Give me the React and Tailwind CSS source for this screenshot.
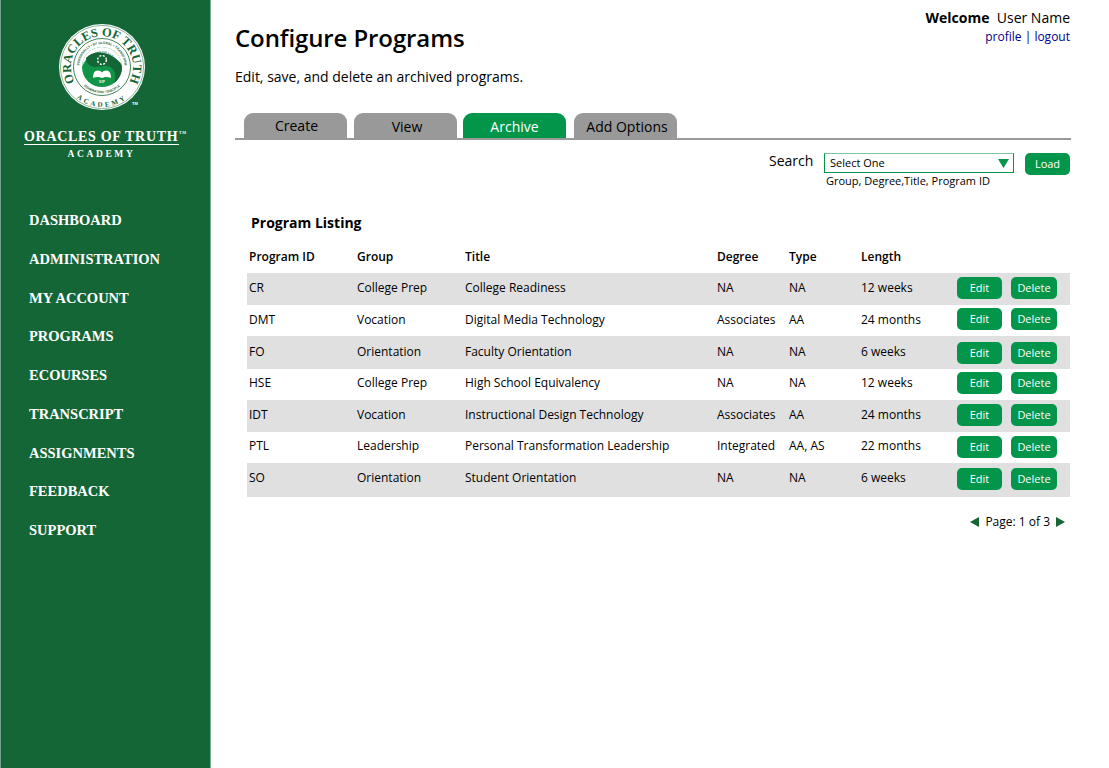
const NAV = [
  "DASHBOARD",
  "ADMINISTRATION",
  "MY ACCOUNT",
  "PROGRAMS",
  "ECOURSES",
  "TRANSCRIPT",
  "ASSIGNMENTS",
  "FEEDBACK",
  "SUPPORT",
];

const TABS = [
  { label: "Create", active: false, cls: "ml-[9px] pl-[2px] pb-[1px]" },
  { label: "View", active: false, cls: "ml-[7px] pl-[3px] pt-[1px]" },
  { label: "Archive", active: true, cls: "ml-[6px] pt-[1px]" },
  { label: "Add Options", active: false, cls: "ml-[8px] pl-[3px] pt-[1px]" },
];

// row heights and inner offsets wobble a little in the original, so they are per row
const ROWS = [
  { id: "CR", group: "College Prep", title: "College Readiness", degree: "NA", type: "NA", length: "12 weeks", h: "h-[32px]", txt: "mt-[7px]", bt: "mt-[4px]" },
  { id: "DMT", group: "Vocation", title: "Digital Media Technology", degree: "Associates", type: "AA", length: "24 months", h: "h-[31px]", txt: "mt-[7px]", bt: "mt-[3px]" },
  { id: "FO", group: "Orientation", title: "Faculty Orientation", degree: "NA", type: "NA", length: "6 weeks", h: "h-[33px]", txt: "mt-[8px]", bt: "mt-[6px]" },
  { id: "HSE", group: "College Prep", title: "High School Equivalency", degree: "NA", type: "NA", length: "12 weeks", h: "h-[31px]", txt: "mt-[6px]", bt: "mt-[3px]" },
  { id: "IDT", group: "Vocation", title: "Instructional Design Technology", degree: "Associates", type: "AA", length: "24 months", h: "h-[32px]", txt: "mt-[7px]", bt: "mt-[4px]" },
  { id: "PTL", group: "Leadership", title: "Personal Transformation Leadership", degree: "Integrated", type: "AA, AS", length: "22 months", h: "h-[31px]", txt: "mt-[6px]", bt: "mt-[4px]" },
  { id: "SO", group: "Orientation", title: "Student Orientation", degree: "NA", type: "NA", length: "6 weeks", h: "h-[34px]", txt: "mt-[7px]", bt: "mt-[5px]" },
];

function Logo() {
  return (
    <svg width="92" height="92" viewBox="0 0 92 92" className="block">
      <defs>
        <path id="arcTop" d="M 18.6 60.6 A 31 31 0 1 1 73.4 60.6" />
        <path id="arcBottom" d="M 15.4 71.7 A 40 40 0 0 0 76.6 71.7" />
        <path id="arcInner" d="M 25.5 55 A 22.6 22.6 0 1 1 66.5 55" />
        <path id="arcInnerBottom" d="M 22.5 58 A 26.5 26.5 0 0 0 69.5 58" />
        <path id="arcMotto" d="M 33 42 A 13.5 13.5 0 0 1 59 42" />
      </defs>
      <circle cx="46" cy="46" r="43" fill="#ffffff" />
      <circle cx="46" cy="46" r="41.6" fill="none" stroke="#156637" strokeWidth="0.5" />
      <text fontFamily="Liberation Serif, serif" fontWeight="700" fontSize="12.5" fill="#156637">
        <textPath href="#arcTop" startOffset="50%" textAnchor="middle">ORACLES OF TRUTH</textPath>
      </text>
      <text fontFamily="Liberation Serif, serif" fontWeight="700" fontSize="7" letterSpacing="2.6" fill="#156637">
        <textPath href="#arcBottom" startOffset="50%" textAnchor="middle">ACADEMY</textPath>
      </text>
      <circle cx="46" cy="46" r="28.5" fill="#ffffff" stroke="#156637" strokeWidth="0.8" />
      <text fontFamily="Liberation Sans, sans-serif" fontWeight="700" fontSize="3.3" fill="#156637">
        <textPath href="#arcInner" startOffset="50%" textAnchor="middle">PERSONALLY • BY GLOBAL • TRANSFORM</textPath>
      </text>
      <text fontFamily="Liberation Sans, sans-serif" fontWeight="700" fontSize="3.3" fill="#156637">
        <textPath href="#arcInnerBottom" startOffset="50%" textAnchor="middle">GENERATION • DISCIPLE</textPath>
      </text>
      <circle cx="46" cy="46" r="20" fill="#0f9448" />
      <path d="M 26 46 A 20 20 0 0 1 66 46 C 60 36 56 35 46 32 C 38 30 30 36 26 46 Z" fill="#ffffff" />
      <path d="M 30 37 C 36 30 48 30 56 35 C 62 39 66 42 66 46 A 20 20 0 0 1 58 62 C 61 54 59 49 54 46 C 50 44 44 46 39 46 C 34 46 30 42 30 37 Z" fill="#156637" />
      <text fontFamily="Liberation Serif, serif" fontWeight="700" fontSize="3.2" fill="#156637">
        <textPath href="#arcMotto" startOffset="50%" textAnchor="middle">SOD VINT ORACULA</textPath>
      </text>
      <circle cx="46" cy="39" r="4.4" fill="none" stroke="#ffffff" strokeWidth="1.4" strokeDasharray="2 1.5" />
      <path d="M 37 57 Q 37 49.5 41.5 49.5 Q 45 49.5 46 51.5 Q 47 49.5 50.5 49.5 Q 55 49.5 55 57 Q 50.5 55 46 57 Q 41.5 55 37 57 Z" fill="#ffffff" />
      <text x="46" y="61.5" textAnchor="middle" fontFamily="Liberation Sans, sans-serif" fontWeight="700" fontSize="2.8" fill="#ffffff">SOP</text>
    </svg>
  );
}

function Sidebar() {
  return (
    <aside className="w-[211px] shrink-0 min-h-[768px] bg-[#156637] border-l border-l-[#6fa287] border-r border-r-[#7fae96] flex flex-col">
      <div className="relative ml-[55px] mt-[21px]">
        <Logo />
        <span className="absolute left-[76px] top-[80px] text-[4px] leading-[5px] font-bold font-['Liberation_Sans',sans-serif] text-white">TM</span>
      </div>
      <div className="mt-[17px] ml-[23px] w-[155px] font-['Liberation_Serif',serif] text-white">
        <div className="relative text-[14px] leading-[14px] font-bold tracking-[0.7px] whitespace-nowrap border-b border-white">
          ORACLES OF TRUTH
          <span className="absolute left-[155px] top-[0px] text-[4px] leading-[5px]">TM</span>
        </div>
        <div className="text-center text-[9.5px] leading-[11px] mt-[4px] font-bold tracking-[2.6px]">ACADEMY</div>
      </div>
      <nav className="mt-[50px] ml-[28px] flex flex-col gap-[18.75px]">
        {NAV.map((n) => (
          <a key={n} className="font-['Liberation_Serif',serif] font-bold text-white text-[14.5px] leading-[20px] whitespace-nowrap">
            {n}
          </a>
        ))}
      </nav>
    </aside>
  );
}

function Row({ r, index }) {
  const btn = "h-[22px] rounded-[5px] bg-[#03964a] text-white text-[11px] flex items-center justify-center";
  return (
    <div className={`${r.h} flex items-start text-[12px] leading-[16px] ${index % 2 === 0 ? "bg-[#e0e0e0]" : "bg-white"}`}>
      <div className={`w-[110px] pl-[2px] ${r.txt}`}>{r.id}</div>
      <div className={`w-[108px] ${r.txt}`}>{r.group}</div>
      <div className={`w-[252px] ${r.txt}`}>{r.title}</div>
      <div className={`w-[72px] ${r.txt}`}>{r.degree}</div>
      <div className={`w-[72px] ${r.txt}`}>{r.type}</div>
      <div className={`w-[96px] ${r.txt}`}>{r.length}</div>
      <div className={`flex gap-[9px] ${r.bt}`}>
        <button className={`${btn} w-[45px]`}>Edit</button>
        <button className={`${btn} w-[46px]`}>Delete</button>
      </div>
    </div>
  );
}

export default function App() {
  return (
    <div className="flex min-h-[768px] bg-white text-black font-['Open_Sans',sans-serif]">
      <Sidebar />
      <main className="w-[836px] ml-[24px] flex flex-col">
        <div className="flex justify-between items-start">
          <div>
            <h1 className="mt-[21px] text-[24px] leading-[33px] font-semibold tracking-[-0.1px]">Configure Programs</h1>
            <p className="mt-[13px] text-[14px] leading-[19px]">Edit, save, and delete an archived programs.</p>
          </div>
          <div className="mt-[8px] mr-[1px] text-right">
            <div className="text-[14px] leading-[19px]">
              <span className="font-bold">Welcome</span>&nbsp; User Name
            </div>
            <div className="text-[12px] leading-[17px] mt-[1px]">
              <a className="text-[#00008b]">profile</a> | <a className="text-[#00008b]">logout</a>
            </div>
          </div>
        </div>

        <div className="mt-[27px] flex border-b-2 border-[#999999] h-[27px]">
          {TABS.map((t) => (
            <div
              key={t.label}
              className={`${t.cls} w-[103px] h-[25px] rounded-t-[9px] flex items-center justify-center text-[14px] ${
                t.active ? "bg-[#03964a] text-white" : "bg-[#999999] text-black"
              }`}
            >
              {t.label}
            </div>
          ))}
        </div>

        <div className="mt-[13px] flex items-start">
          <div className="ml-[534px] w-[55px] text-[14px] leading-[19px] mt-[-2px]">Search</div>
          <div>
            <div className="w-[190px] h-[20px] border border-[#03964a] border-t-[#7cc6a0] flex items-center justify-between pl-[5px] pr-[4px] text-[11px]">
              <span>Select One</span>
              <svg width="11" height="9" viewBox="0 0 11 9">
                <path d="M0 0 H11 L5.5 9 Z" fill="#03964a" />
              </svg>
            </div>
            <div className="ml-[2px] text-[11px] leading-[15px]">Group, Degree,Title, Program ID</div>
          </div>
          <button className="ml-[11px] w-[45px] h-[22px] rounded-[5px] bg-[#03964a] text-white text-[11px] flex items-center justify-center">
            Load
          </button>
        </div>

        <h2 className="mt-[25px] ml-[16px] text-[14px] leading-[19px] font-bold">Program Listing</h2>

        <div className="ml-[12px] w-[823px] mt-[9px]">
          <div className="h-[32px] flex items-center text-[12px] font-semibold">
            <div className="w-[110px] pl-[2px]">Program ID</div>
            <div className="w-[108px]">Group</div>
            <div className="w-[252px]">Title</div>
            <div className="w-[72px]">Degree</div>
            <div className="w-[72px]">Type</div>
            <div className="w-[96px]">Length</div>
          </div>
          {ROWS.map((r, i) => (
            <Row key={r.id} r={r} index={i} />
          ))}
          <div className="mt-[16px] mr-[5px] flex items-center justify-end gap-[6px] text-[12px] leading-[17px]">
            <svg width="9" height="10" viewBox="0 0 9 10">
              <path d="M9 0 V10 L0 5 Z" fill="#156637" />
            </svg>
            <span>Page: 1 of 3</span>
            <svg width="9" height="10" viewBox="0 0 9 10">
              <path d="M0 0 V10 L9 5 Z" fill="#156637" />
            </svg>
          </div>
        </div>
      </main>
    </div>
  );
}
